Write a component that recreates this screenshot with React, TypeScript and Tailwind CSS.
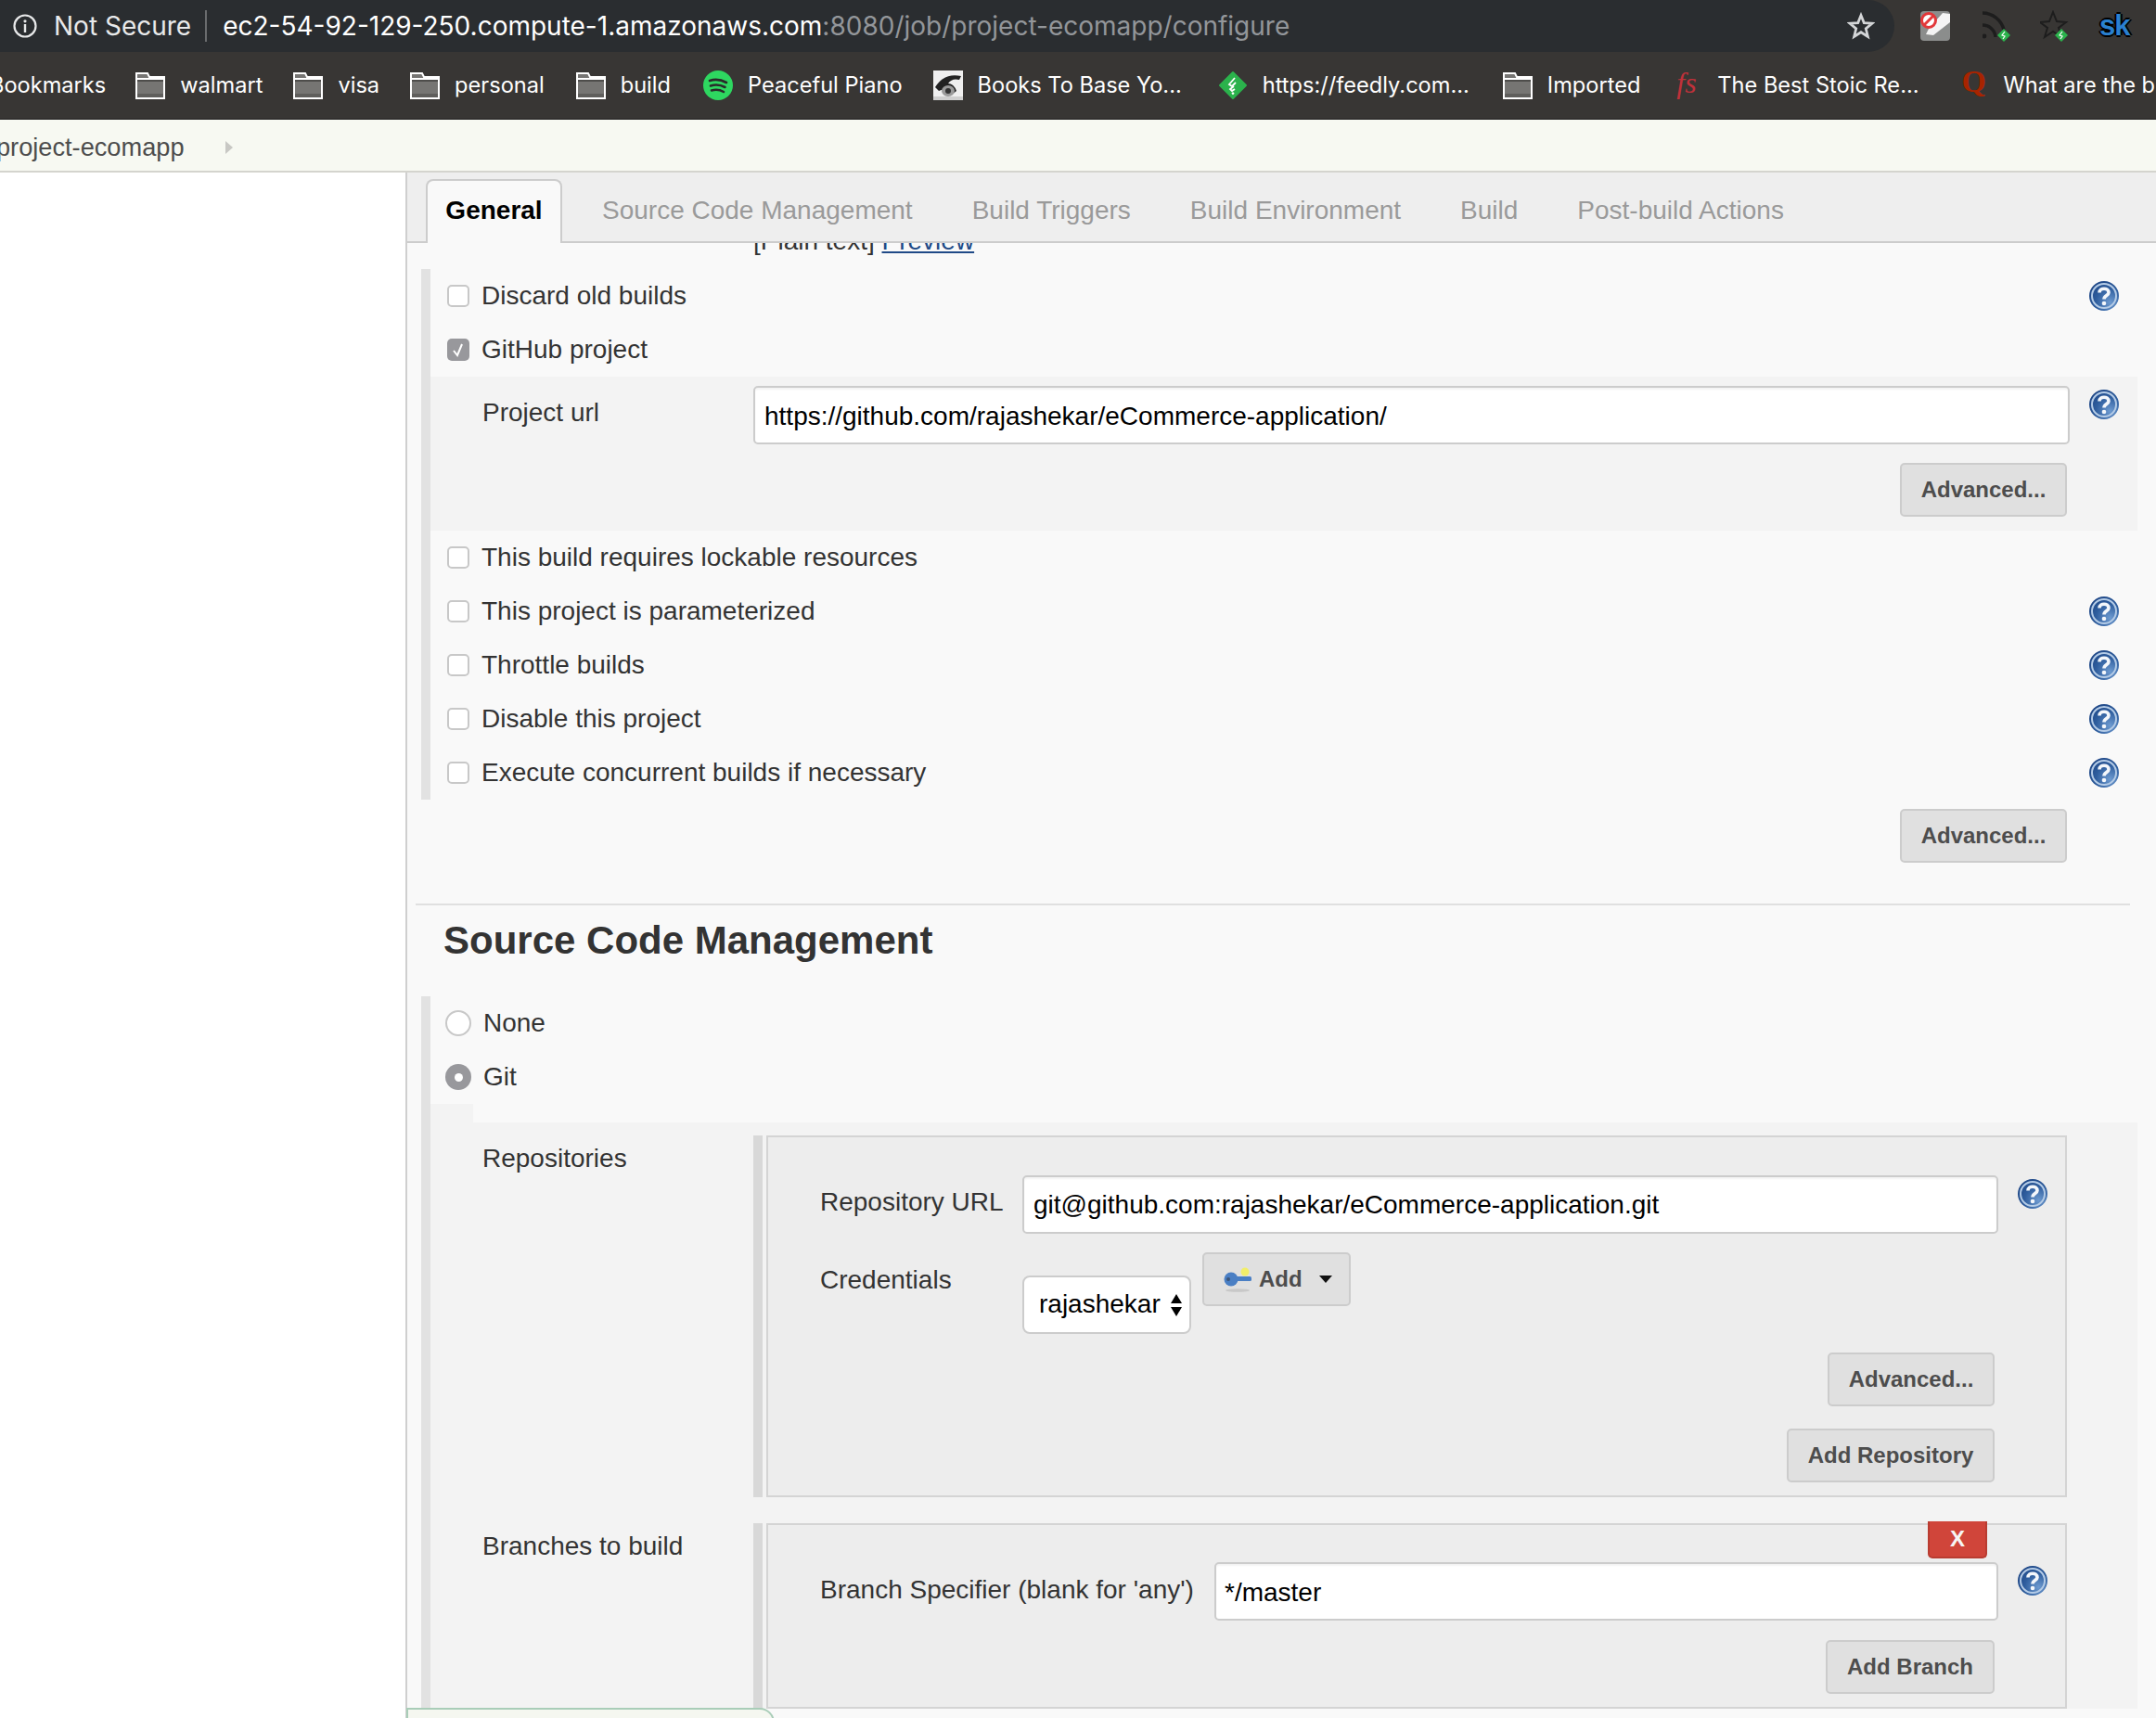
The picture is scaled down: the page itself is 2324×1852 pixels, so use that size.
import React from "react";

const Folder = () => (
  <svg width="32" height="32" viewBox="0 0 32 32" className="shrink-0">
    <path d="M1 3 H13 L15 7 H31 V30 H1 Z" fill="#767573" stroke="#fff" strokeWidth="2" />
    <path d="M2 9 H30" stroke="#fff" strokeWidth="2" />
    <rect x="2" y="10" width="28" height="2" fill="#4e4d4b" />
    <rect x="2" y="25" width="28" height="4" fill="#5f5e5c" />
  </svg>
);
const Spotify = () => (
  <svg width="32" height="32" viewBox="0 0 32 32" className="shrink-0">
    <circle cx="16" cy="16" r="16" fill="#2ed760" />
    <path d="M7 11 Q16 8 25 13 M8 16.5 Q16 14 23.5 18 M9 21.5 Q16 19.5 22 23" stroke="#2a2a2a" strokeWidth="2.6" fill="none" strokeLinecap="round" />
  </svg>
);
const Eye = () => (
  <svg width="32" height="32" viewBox="0 0 32 32" className="shrink-0">
    <rect width="32" height="32" fill="#efefef" />
    <path d="M2 18 Q12 2 30 6 L28 10 Q20 8 16 14 Q22 14 25 22 L20 26 Q14 18 6 22 Z" fill="#222" />
    <ellipse cx="16" cy="22" rx="7" ry="6" fill="#9a9a9a" />
    <circle cx="16" cy="22" r="3" fill="#333" />
    <rect y="28" width="32" height="4" fill="#cfcfcf" />
  </svg>
);
const Feedly = () => (
  <svg width="32" height="32" viewBox="0 0 32 32" className="shrink-0">
    <path d="M16 2 L30 16 L16 30 L2 16 Z" fill="#2bb24c" stroke="#2bb24c" strokeWidth="2" strokeLinejoin="round" />
    <path d="M18 8 L12 15 L15 17 L19 13 M17 17 L13 20 L15 22 L18 20 M15 24 L16 25 L17 24" stroke="#fff" strokeWidth="1.8" fill="none" />
  </svg>
);

const Help = () => (
  <svg width="32" height="32" viewBox="0 0 32 32" className="shrink-0">
    <defs>
      <radialGradient id="hg" cx="0.7" cy="0.72" r="0.85">
        <stop offset="0" stopColor="#6d9ad0" />
        <stop offset="0.55" stopColor="#2f5e9e" />
        <stop offset="1" stopColor="#1c4382" />
      </radialGradient>
    </defs>
    <circle cx="16" cy="16" r="16" fill="url(#hg)" />
    <circle cx="16" cy="16" r="13" fill="none" stroke="#b4cbe6" strokeWidth="2" />
    <path d="M11 12.5 C11 6.8 21 6.8 21 12.5 C21 15.5 16 15.5 16 19.5" fill="none" stroke="#f4f7fb" strokeWidth="3.6" />
    <circle cx="16" cy="24" r="2.3" fill="#f4f7fb" />
  </svg>
);

const Btn = ({ children, w, className = "" }: { children: React.ReactNode; w: string; className?: string }) => (
  <div className={`${w} h-[58px] flex items-center justify-center shrink-0 bg-[#e0e0e0] border-2 border-[#cccccc] rounded-[5px] text-[24px] font-bold text-[#4d4d4d] ${className}`}>
    {children}
  </div>
);

const Check = ({ on }: { on?: boolean }) =>
  on ? (
    <span className="w-[24px] h-[24px] rounded-[5px] bg-[#98989c] flex items-center justify-center shrink-0">
      <svg width="16" height="18" viewBox="0 0 16 18"><path d="M3 10 L7 15 L12 3" stroke="#fff" strokeWidth="2" fill="none" /></svg>
    </span>
  ) : (
    <span className="w-[24px] h-[24px] rounded-[5px] bg-white border-2 border-[#c8c8c8] shrink-0" />
  );

const Row = ({ label, on, help = true }: { label: string; on?: boolean; help?: boolean }) => (
  <div className="h-[58px] flex items-center pl-[18px] pr-[20px]">
    <Check on={on} />
    <span className="ml-[13px] flex-1 text-[28px]">{label}</span>
    {help && <Help />}
  </div>
);

const Radio = ({ label, on }: { label: string; on?: boolean }) => (
  <div className="h-[58px] flex items-center pl-[16px]">
    {on ? (
      <span className="w-[28px] h-[28px] rounded-full bg-[#98989c] flex items-center justify-center shrink-0">
        <span className="w-[9px] h-[9px] rounded-full bg-white" />
      </span>
    ) : (
      <span className="w-[28px] h-[28px] rounded-full bg-white border-2 border-[#c8c8c8] shrink-0" />
    )}
    <span className="ml-[13px] text-[28px]">{label}</span>
  </div>
);

const Field = ({ value, w, className = "" }: { value: string; w: string; className?: string }) => (
  <input
    readOnly
    value={value}
    className={`${w} h-[63px] px-[9px] bg-white border-2 border-[#cccccc] rounded-[5px] text-[28px] text-black outline-none shrink-0 shadow-[inset_0_2px_2px_rgba(0,0,0,0.05)] ${className}`}
  />
);

const Bm = ({ icon, children, gap = "gap-[16px]", className = "" }: { icon: React.ReactNode; children: React.ReactNode; gap?: string; className?: string }) => (
  <div className={`flex items-center ${gap} shrink-0 ${className}`}>
    {icon}
    <span className="text-white text-[23.6px] whitespace-nowrap">{children}</span>
  </div>
);

export default function App() {
  return (
    <div className="relative w-[2324px] h-[1852px] overflow-hidden flex flex-col bg-white text-[#333333] font-['Liberation_Sans',Arial,sans-serif]">
      {/* address bar */}
      <div className="h-[56px] shrink-0 bg-[#383634] flex font-['Inter',sans-serif]">
        <div className="w-[2042px] bg-[#2a2d30] rounded-r-[28px] flex items-center pl-[13px] pr-[20px]">
          <svg width="28" height="28" viewBox="0 0 28 28" className="shrink-0">
            <circle cx="14" cy="14" r="11.5" fill="none" stroke="#e8e9ea" strokeWidth="2.2" />
            <circle cx="14" cy="8.8" r="1.6" fill="#e8e9ea" />
            <rect x="12.8" y="12" width="2.4" height="9" fill="#e8e9ea" />
          </svg>
          <span className="ml-[17px] text-[#e8e9ea] text-[28px]">Not Secure</span>
          <span className="ml-[15px] w-[2px] h-[34px] bg-[#6a6c6e]" />
          <span className="ml-[17px] text-[28px] text-white whitespace-nowrap flex-1">
            ec2-54-92-129-250.compute-1.amazonaws.com<span className="text-[#93969a]">:8080/job/project-ecomapp/configure</span>
          </span>
          <svg width="30" height="30" viewBox="0 0 24 24" className="shrink-0 -translate-x-[1px]"><path d="M12 2.8 L14.6 9.3 L21.6 9.8 L16.2 14.3 L17.9 21.2 L12 17.4 L6.1 21.2 L7.8 14.3 L2.4 9.8 L9.4 9.3 Z" fill="none" stroke="#d4d6d8" strokeWidth="2.2" /></svg>
        </div>
        <div className="flex-1 flex items-center pl-[28px]">
          <svg width="32" height="32" viewBox="0 0 32 32" className="shrink-0">
            <rect width="32" height="32" rx="4" fill="#8b8d8c" />
            <path d="M32 3 V12 L14 26 L6 25 L9 19 L24 2 Z" fill="#f4f4f4" />
            <circle cx="9" cy="10" r="7.5" fill="#fff" stroke="#e2383a" strokeWidth="3" />
            <path d="M4 15 L14 5" stroke="#e2383a" strokeWidth="3" />
          </svg>
          <svg width="31" height="34" viewBox="0 0 31 34" className="shrink-0 ml-[35px]">
            <path d="M0 3 A24 24 0 0 1 23 21 M0 16 A14 14 0 0 1 14 29" fill="none" stroke="#1d1d1d" strokeWidth="3.4" />
            <circle cx="2" cy="28" r="2.4" fill="#1d1d1d" />
            <path d="M23 20 L30 27 L23 34 L16 27 Z" fill="#2bb24c" />
            <path d="M24 23 L21 27 L24 28 L22 31" stroke="#fff" strokeWidth="1.2" fill="none" />
          </svg>
          <svg width="31" height="34" viewBox="0 0 31 34" className="shrink-0 ml-[31px]">
            <path d="M14 2 L18 12 L28 13 L20 19 L23 29 L14 23 L5 29 L8 19 L0 13 L10 12 Z" fill="none" stroke="#1d1d1d" strokeWidth="2" />
            <path d="M23 20 L30 27 L23 34 L16 27 Z" fill="#2bb24c" />
            <path d="M24 23 L21 27 L24 28 L22 31" stroke="#fff" strokeWidth="1.2" fill="none" />
          </svg>
          <span className="ml-[33px] w-[32px] text-[#2a80d0] text-[31px] font-bold leading-none tracking-[-1px] font-['Liberation_Sans',sans-serif] -translate-y-[1px] [text-shadow:-2px_0_0_#000,2px_0_0_#000,0_-2px_0_#000,0_2px_0_#000]">sk</span>
        </div>
      </div>

      {/* bookmarks */}
      <div className="h-[73px] shrink-0 bg-[#383634] border-b border-[#1e1e1e] flex items-center gap-[33px] ml-[-11px] font-['Inter',sans-serif]">
        <span className="text-white text-[23.6px] whitespace-nowrap shrink-0">Bookmarks</span>
        <Bm icon={<Folder />} className="-ml-[1px]">walmart</Bm>
        <Bm icon={<Folder />}>visa</Bm>
        <Bm icon={<Folder />}>personal</Bm>
        <Bm icon={<Folder />} className="ml-[1px]">build</Bm>
        <Bm icon={<Spotify />} className="ml-[2px]">Peaceful Piano</Bm>
        <Bm icon={<Eye />}>Books To Base Yo...</Bm>
        <Bm icon={<Feedly />} className="ml-[6px]">https://feedly.com...</Bm>
        <Bm icon={<Folder />} className="ml-[3px]">Imported</Bm>
        <Bm
          gap="gap-[20px]"
          className="ml-[6px]"
          icon={<span className="w-[24px] pb-[6px] text-[#c0313a] text-[32px] italic leading-none font-['Liberation_Serif',serif]">fs</span>}
        >
          The Best Stoic Re...
        </Bm>
        <Bm
          gap="gap-[18px]"
          className="ml-[13px]"
          icon={<span className="w-[27px] pb-[8px] text-[#a82400] text-[34px] font-bold leading-none font-['Liberation_Serif',serif]">Q</span>}
        >
          What are the b
        </Bm>
      </div>

      {/* breadcrumb */}
      <div className="h-[57px] shrink-0 bg-[#f7f9f2] border-b-2 border-[#d4d4ce] flex items-center ml-[-4px] pt-[4px]">
        <span className="text-[#4d4d4d] text-[27.2px] leading-none">project-ecomapp</span>
        <svg width="10" height="16" viewBox="0 0 10 16" className="ml-[43px]"><path d="M1 1 L9 8 L1 15 Z" fill="#c8c8c4" /></svg>
      </div>

      {/* body */}
      <div className="flex-1 flex min-h-0">
        <div className="w-[437px] shrink-0 bg-white" />
        <div className="flex-1 min-w-0 bg-[#f9f9f9] border-l-2 border-[#cfcfcf]">
          {/* tabs */}
          <div className="h-[76px] bg-[#eeeeee] border-b-2 border-[#cccccc] flex items-end pl-[20px] text-[28px] text-[#9a9a9a]">
            <div className="w-[147px] h-[69px] -mb-[2px] pb-[4px] bg-[#f9f9f9] border-2 border-b-0 border-[#cccccc] rounded-t-[8px] flex items-center justify-center text-black font-bold">General</div>
            <div className="h-[67px] flex items-center gap-[64px] pl-[43px]">
              <span>Source Code Management</span>
              <span>Build Triggers</span>
              <span>Build Environment</span>
              <span>Build</span>
              <span>Post-build Actions</span>
            </div>
          </div>

          {/* clipped description */}
          <div className="h-[28px] overflow-hidden pl-[373px]">
            <div className="-mt-[18px] leading-[32px] text-[28px] text-[#333333]">
              [Plain text] <span className="text-[#204a87] underline">Preview</span>
            </div>
          </div>

          {/* general options */}
          <div className="ml-[15px] mr-[20px] border-l-[10px] border-[#e2e2e2]">
            <Row label="Discard old builds" />
            <Row label="GitHub project" on help={false} />
            <div className="h-[166px] bg-[#f3f3f3] pt-[10px] pr-[20px]">
              <div className="flex items-start">
                <div className="w-[348px] pl-[56px] pt-[8px] text-[28px] text-[#333]">Project url</div>
                <Field value="https://github.com/rajashekar/eCommerce-application/" w="w-[1419px]" className="pt-[2px] pl-[10px]" />
                <div className="ml-[21px] pt-[4px]"><Help /></div>
              </div>
              <div className="flex justify-end pr-[56px] mt-[20px]"><Btn w="w-[180px]">Advanced...</Btn></div>
            </div>
            <Row label="This build requires lockable resources" help={false} />
            <Row label="This project is parameterized" />
            <Row label="Throttle builds" />
            <Row label="Disable this project" />
            <Row label="Execute concurrent builds if necessary" />
          </div>
          <div className="flex justify-end pr-[96px] mt-[10px]"><Btn w="w-[180px]">Advanced...</Btn></div>

          {/* SCM */}
          <div className="ml-[9px] mr-[28px] mt-[44px] border-t-2 border-[#e0e0e0] pl-[30px] pt-[12px] h-[100px]">
            <h2 className="text-[42px] leading-[52px] font-bold text-[#333]">Source Code Management</h2>
          </div>
          <div className="ml-[15px] mr-[20px] border-l-[10px] border-[#e2e2e2] h-[900px]">
            <Radio label="None" />
            <Radio label="Git" on />
            <div className="w-[46px] h-[20px] bg-[#f3f3f3]" />
            <div className="bg-[#f3f3f3] pt-[14px] flex flex-col gap-[28px]">
              {/* Repositories */}
              <div className="flex items-start">
                <div className="w-[348px] shrink-0 pl-[56px] pt-[4px] text-[28px] text-[#333]">Repositories</div>
                <div className="w-[1416px] shrink-0 flex gap-[4px]">
                  <div className="w-[10px] bg-[#d8d8d8] shrink-0" />
                  <div className="flex-1 h-[390px] bg-[#ededed] border-2 border-[#d4d4d4] pt-[41px] pl-[56px] pr-[76px]">
                    <div className="flex items-start">
                      <div className="w-[218px] shrink-0 pt-[8px] text-[28px] text-[#333]">Repository URL</div>
                      <Field value="git@github.com:rajashekar/eCommerce-application.git" w="w-[1052px]" className="pl-[10px]" />
                      <div className="ml-[21px] pt-[4px] -mr-[60px]"><Help /></div>
                    </div>
                    <div className="flex items-start mt-[20px]">
                      <div className="w-[218px] shrink-0 pt-[9px] text-[28px] text-[#333]">Credentials</div>
                      <div className="w-[182px] h-[63px] mt-[25px] bg-white border-2 border-[#cccccc] rounded-[8px] flex items-center pl-[16px] pr-[7px] justify-between text-[28px] text-black">
                        <span className="-translate-y-[1px]">rajashekar</span>
                        <svg width="14" height="28" viewBox="0 0 14 28"><path d="M7 2 L13 12 H1 Z M1 16 H13 L7 26 Z" fill="#000" /></svg>
                      </div>
                      <Btn w="w-[160px]" className="ml-[12px] justify-start pl-[21px]">
                        <svg width="32" height="28" viewBox="0 0 32 28" className="shrink-0">
                          <ellipse cx="15" cy="26" rx="13" ry="1.8" fill="#c8c8c8" />
                          <circle cx="8" cy="14" r="7.5" fill="#4a7fc4" />
                          <circle cx="5" cy="14" r="2" fill="#3a5478" />
                          <rect x="12" y="11" width="18" height="5" rx="1.5" fill="#4a7fc4" />
                          <circle cx="23" cy="6" r="4.5" fill="#f2ee6a" />
                        </svg>
                        <span className="ml-[6px]">Add</span>
                        <svg width="14" height="8" viewBox="0 0 14 8" className="ml-[18px]"><path d="M0 0 H14 L7 8 Z" fill="#111" /></svg>
                      </Btn>
                    </div>
                    <div className="flex justify-end mt-[20px]"><Btn w="w-[180px]">Advanced...</Btn></div>
                    <div className="flex justify-end mt-[24px]"><Btn w="w-[224px]">Add Repository</Btn></div>
                  </div>
                </div>
              </div>
              {/* Branches */}
              <div className="flex items-start">
                <div className="w-[348px] shrink-0 pl-[56px] pt-[4px] text-[28px] text-[#333]">Branches to build</div>
                <div className="w-[1416px] shrink-0 flex gap-[4px]">
                  <div className="w-[10px] bg-[#d8d8d8] shrink-0" />
                  <div className="relative flex-1 h-[200px] bg-[#ededed] border-2 border-[#d4d4d4] pt-[40px] pl-[56px] pr-[76px]">
                    <div className="absolute top-[-4px] left-[1250px] w-[64px] h-[40px] bg-[#d0453a] border-2 border-[#b93c31] border-t-0 rounded-b-[5px] flex items-center justify-center text-[#f6f6f6] font-bold text-[24px]">X</div>
                    <div className="flex items-start">
                      <div className="w-[425px] shrink-0 pt-[9px] text-[28px] text-[#333] whitespace-nowrap">Branch Specifier (blank for 'any')</div>
                      <Field value="*/master" w="w-[845px]" className="pt-[2px]" />
                      <div className="ml-[21px] pt-[4px] -mr-[60px]"><Help /></div>
                    </div>
                    <div className="flex justify-end mt-[21px]"><Btn w="w-[182px]">Add Branch</Btn></div>
                  </div>
                </div>
              </div>
            </div>
          </div>
        </div>
      </div>

      {/* bottom bar peeking in */}
      <div className="absolute left-[438px] top-[1841px] w-[397px] h-[20px] bg-[#f5f7f0] border-2 border-[#a9cdb8] rounded-tr-[16px]" />
    </div>
  );
}
